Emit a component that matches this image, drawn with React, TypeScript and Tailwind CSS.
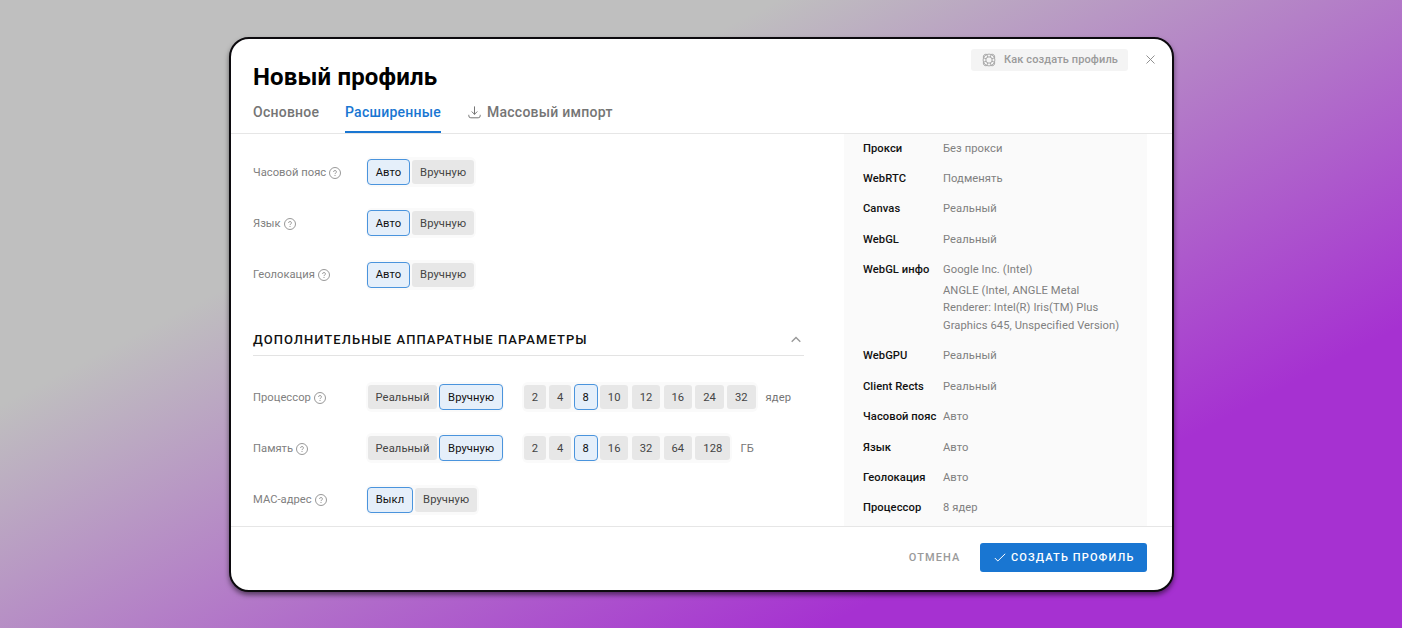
import React from "react";

type Option = { label: string; width: string };

const manual: Option = { label: "Вручную", width: "w-[61.5px]" };
const auto: Option = { label: "Авто", width: "w-[41px]" };
const real: Option = { label: "Реальный", width: "w-[69px]" };
const off: Option = { label: "Выкл", width: "w-[44px]" };
const num = (n: number): Option => ({
  label: String(n),
  width: n < 10 ? "w-[22px]" : n < 100 ? "w-[28.4px]" : "w-[35px]",
});

function Segmented({ options, active }: { options: Option[]; active: string }) {
  return (
    <div className="flex h-[30px] items-center gap-[3.4px] rounded-md bg-[#fafafa] px-0.5">
      {options.map((o) => (
        <div key={o.label} className={o.width}>
          {o.label === active ? (
            <button className="-mx-px flex h-[26px] w-[calc(100%+2px)] items-center justify-center rounded-[4px] border border-[#4a94dd] bg-[#e5effa] pt-[1.4px] text-[#111]">
              {o.label}
            </button>
          ) : (
            <button className="flex h-6 w-full items-center justify-center rounded-[3px] bg-[#e7e7e7] pt-[1.4px] text-[#444]">
              {o.label}
            </button>
          )}
        </div>
      ))}
    </div>
  );
}

function Help() {
  return (
    <svg className="-mt-px ml-[3px] size-3" viewBox="0 0 12 12" fill="none" stroke="#8c8c8c">
      <circle cx="6" cy="6" r="5.5" strokeWidth="0.9" />
      <path d="M4.6 4.9a1.4 1.4 0 1 1 2 1.25c-.45.2-.6.4-.6.9" strokeWidth="0.9" />
      <path d="M6 8v.9" strokeWidth="1" />
    </svg>
  );
}

function Row({ label, children }: { label: string; children: React.ReactNode }) {
  return (
    <div className="flex h-[51.2px] items-center text-[11.2px] tracking-[0.1px]">
      <div className="flex w-[113px] items-center whitespace-nowrap pt-[2.4px] tracking-[0.03px] text-[#808080]">
        {label}
        <Help />
      </div>
      {children}
    </div>
  );
}

function LifeBuoy() {
  return (
    <svg className="size-[14px]" viewBox="0 0 14 14" fill="none" stroke="#999" strokeWidth="0.8">
      <circle cx="7" cy="7" r="5.9" />
      <circle cx="7" cy="7" r="3.2" />
      <path d="M4.6 1.3Q1.2 .9 1.3 4.6M9.4 1.3q3.4-.4 3.3 3.3M4.6 12.7Q1.2 13.1 1.3 9.4M9.4 12.7q3.4.4 3.3-3.3M4.8 1.6l1 2.5M1.6 4.8l2.5 1M9.2 1.6l-1 2.5M12.4 4.8l-2.5 1M4.8 12.4l1-2.5M1.6 9.2l2.5-1M9.2 12.4l-1-2.5M12.4 9.2l-2.5-1" />
    </svg>
  );
}

const summary: [string, string, string?][] = [
  ["Прокси", "Без прокси"],
  ["WebRTC", "Подменять"],
  ["Canvas", "Реальный"],
  ["WebGL", "Реальный"],
  ["WebGL инфо", "Google Inc. (Intel)", "ANGLE (Intel, ANGLE Metal Renderer: Intel(R) Iris(TM) Plus Graphics 645, Unspecified Version)"],
  ["WebGPU", "Реальный"],
  ["Client Rects", "Реальный"],
  ["Часовой пояс", "Авто"],
  ["Язык", "Авто"],
  ["Геолокация", "Авто"],
  ["Процессор", "8 ядер"],
];

export default function App() {
  return (
    <div className="h-[628px] w-[1402px] overflow-hidden bg-[linear-gradient(152.5deg,#bfbfbf_29.8%,#a631d1_77.8%)] pl-[229px] pt-[37px] font-['Roboto',sans-serif]">
      <div className="flex h-[555px] w-[945px] flex-col overflow-hidden rounded-[20px] border-2 border-[#0c0a0e] bg-white shadow-[0_3px_5px_rgba(0,0,0,0.5)]">
        <header className="flex h-[95px] shrink-0 justify-between border-b border-[#e6e6e6] pl-[22px] pr-[16px]">
          <div>
            <h1 className="mt-[23px] h-[30px] whitespace-nowrap text-[24px] font-bold leading-[30px] tracking-[0.15px] text-black">Новый профиль</h1>
            <nav className="flex h-[41px] whitespace-nowrap text-[14px] font-medium leading-[40px] tracking-[0.25px] text-[#757575]">
              <a className="w-[92px]">Основное</a>
              <a className="w-[96px] border-b-2 border-[#1976d2] text-[#1976d2]">Расширенные</a>
              <a className="ml-[27px] flex h-[40px] items-center">
                <svg className="mr-[6px] size-[13px]" viewBox="0 0 13 13" fill="none" stroke="#757575" strokeWidth="1" strokeLinecap="round" strokeLinejoin="round">
                  <path d="M6.5.8v7.4M4 5.8l2.5 2.5L9 5.8M.8 9.2v.6a2 2 0 0 0 2 2h7.4a2 2 0 0 0 2-2v-.6" />
                </svg>
                Массовый импорт
              </a>
            </nav>
          </div>
          <div className="flex h-[23px] items-center pt-[18px]">
            <button className="mr-[17px] flex h-[22px] w-[157px] shrink-0 items-center gap-[8px] whitespace-nowrap rounded-[3px] bg-[#f4f4f4] pl-[11px] pt-px text-[11px] font-medium tracking-[0.12px] text-[#9a9a9a]">
              <LifeBuoy />
              Как создать профиль
            </button>
            <svg className="size-[11px]" viewBox="0 0 11 11" stroke="#858585" strokeWidth="0.9">
              <path d="M1.5 1.5l8 8M9.5 1.5l-8 8" />
            </svg>
          </div>
        </header>

        <main className="flex h-[392px] shrink-0 overflow-hidden">
          <section className="ml-[22px] w-[551px] pt-[12.7px]">
            <Row label="Часовой пояс"><Segmented options={[auto, manual]} active="Авто" /></Row>
            <Row label="Язык"><Segmented options={[auto, manual]} active="Авто" /></Row>
            <Row label="Геолокация"><Segmented options={[auto, manual]} active="Авто" /></Row>
            <div className="mb-[15.7px] mt-[20.7px] flex h-[35px] items-center justify-between border-b border-[#e3e3e3] pt-[3px]">
              <h2 className="whitespace-nowrap text-[13px] font-medium tracking-[1.06px] text-[#111]">ДОПОЛНИТЕЛЬНЫЕ АППАРАТНЫЕ ПАРАМЕТРЫ</h2>
              <svg className="mr-[3px] h-[7px] w-[10px]" viewBox="0 0 10 7" fill="none" stroke="#999" strokeWidth="1.4">
                <path d="M.7 5.8L5 1.5l4.3 4.3" />
              </svg>
            </div>
            <Row label="Процессор">
              <Segmented options={[real, manual]} active="Вручную" />
              <div className="ml-[18px]"><Segmented options={[2, 4, 8, 10, 12, 16, 24, 32].map(num)} active="8" /></div>
              <span className="ml-[8px] pt-[1.6px] text-[#757575]">ядер</span>
            </Row>
            <Row label="Память">
              <Segmented options={[real, manual]} active="Вручную" />
              <div className="ml-[18px]"><Segmented options={[2, 4, 8, 16, 32, 64, 128].map(num)} active="8" /></div>
              <span className="ml-[8px] pt-px text-[#757575]">ГБ</span>
            </Row>
            <Row label="MAC-адрес"><Segmented options={[off, manual]} active="Выкл" /></Row>
          </section>
          <aside className="ml-[40px] w-[303px] bg-[#fafafa] pl-[19px] pt-[5.5px] text-[11.2px] leading-[17.6px] tracking-[0.07px]">
            {summary.map(([key, value, extra]) => (
              <div key={key} className="mb-[12.8px] flex">
                <div className="w-[80px] shrink-0 whitespace-nowrap font-medium text-[#111]">{key}</div>
                <div className="w-[185px] text-[#808080]">
                  <p>{value}</p>
                  {extra && <p className="mt-[3.2px]">{extra}</p>}
                </div>
              </div>
            ))}
          </aside>
        </main>

        <footer className="flex flex-1 items-start justify-end border-t border-[#e6e6e6] pr-[25px] pt-[16px] text-[11px] font-medium">
          <button className="mr-[19.5px] h-[29px] whitespace-nowrap pt-[2px] tracking-[1.1px] text-[#9a9a9a]">ОТМЕНА</button>
          <button className="flex h-[29px] w-[167px] items-center whitespace-nowrap rounded-[3px] bg-[#1976d2] pl-[14px] pt-px tracking-[1.13px] text-white">
            <svg className="-mt-px mr-[5px] h-[9px] w-[12px]" viewBox="0 0 12 9" fill="none" stroke="currentColor">
              <path d="M.8 5l3 3L11.2.8" />
            </svg>
            СОЗДАТЬ ПРОФИЛЬ
          </button>
        </footer>
      </div>
    </div>
  );
}
